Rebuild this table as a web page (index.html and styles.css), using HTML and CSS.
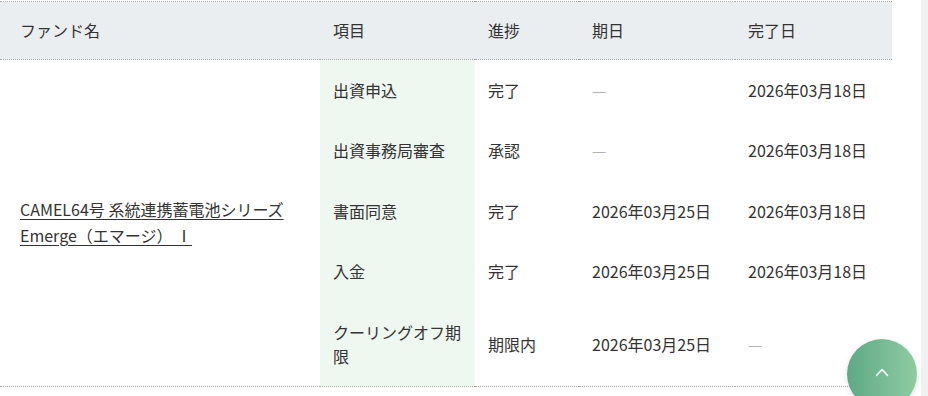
FILE: index.html
```html
<!DOCTYPE html>
<html lang="ja">
<head>
<meta charset="utf-8">
<title>出資手続き状況</title>
<link rel="stylesheet" href="styles.css">
</head>
<body>
<div class="layout">
  <main class="content">
    <table class="progress-table">
      <colgroup>
        <col class="col-fund">
        <col class="col-item">
        <col class="col-status">
        <col class="col-due">
        <col class="col-done">
      </colgroup>
      <thead>
        <tr>
          <th class="cell-fund">ファンド名</th>
          <th>項目</th>
          <th>進捗</th>
          <th>期日</th>
          <th>完了日</th>
        </tr>
      </thead>
      <tbody>
        <tr>
          <td class="cell-fund" rowspan="5"><a href="#" class="fund-link">CAMEL64号 系統連携蓄電池シリーズEmerge（エマージ） Ⅰ</a></td>
          <td class="cell-item">出資申込</td>
          <td>完了</td>
          <td><span class="empty">—</span></td>
          <td>2026年03月18日</td>
        </tr>
        <tr>
          <td class="cell-item">出資事務局審査</td>
          <td>承認</td>
          <td><span class="empty">—</span></td>
          <td>2026年03月18日</td>
        </tr>
        <tr>
          <td class="cell-item">書面同意</td>
          <td>完了</td>
          <td>2026年03月25日</td>
          <td>2026年03月18日</td>
        </tr>
        <tr>
          <td class="cell-item">入金</td>
          <td>完了</td>
          <td>2026年03月25日</td>
          <td>2026年03月18日</td>
        </tr>
        <tr>
          <td class="cell-item">クーリングオフ期限</td>
          <td>期限内</td>
          <td>2026年03月25日</td>
          <td><span class="empty">—</span></td>
        </tr>
      </tbody>
    </table>
  </main>
  <div class="rail"></div>
</div>
<a href="#" class="to-top" aria-label="ページの先頭へ">
  <svg width="14" height="10" viewBox="0 0 14 10" aria-hidden="true">
    <path d="M1.5 8.5 L7 2.5 L12.5 8.5" fill="none" stroke="#fff" stroke-width="1.6" stroke-linecap="round" stroke-linejoin="round"/>
  </svg>
</a>
</body>
</html>
```
FILE: styles.css
```css
html, body {
  margin: 0;
  padding: 0;
  background: #fff;
}

body {
  font-family: "Noto Sans CJK JP", "Noto Sans", sans-serif;
  font-size: 16px;
  color: #333;
}

.layout {
  display: flex;
  min-height: 396px;
}

.content {
  flex: 1;
  padding-top: 1px;
}

.rail {
  width: 7px;
  background: #f1f1f1;
}

.progress-table {
  width: 892px;
  border-collapse: collapse;
  table-layout: fixed;
  border-top: 1px dotted #a9a9a9;
  border-bottom: 1px dotted #a9a9a9;
}

.col-fund { width: 320px; }
.col-item { width: 155px; }
.col-status { width: 104px; }
.col-due { width: 156px; }
.col-done { width: 157px; }

.progress-table th,
.progress-table td {
  text-align: left;
  font-weight: 400;
  line-height: 1.5;
  padding: 18.25px 13px;
  vertical-align: middle;
}

.progress-table thead th {
  background: #eaeef1;
  padding-top: 15.5px;
  padding-bottom: 15.5px;
  border-bottom: 1px dotted #a9a9a9;
}

.progress-table .cell-fund {
  padding-left: 20px;
  padding-right: 20px;
  line-height: 1.6;
}

.progress-table .cell-item {
  background: #eff7f1;
}

.fund-link {
  color: #333;
  text-decoration: underline;
  text-underline-offset: 3px;
}

.empty {
  color: #b3b3b3;
}

.to-top {
  position: fixed;
  left: 847px;
  top: 339px;
  width: 70px;
  height: 70px;
  border-radius: 50%;
  background: linear-gradient(90deg, #5ea986 0%, #8fcba2 100%);
  box-shadow: 0 2px 6px rgba(0, 0, 0, 0.12);
  display: flex;
  align-items: center;
  justify-content: center;
}

.to-top svg {
  margin-top: -5px;
}
```
